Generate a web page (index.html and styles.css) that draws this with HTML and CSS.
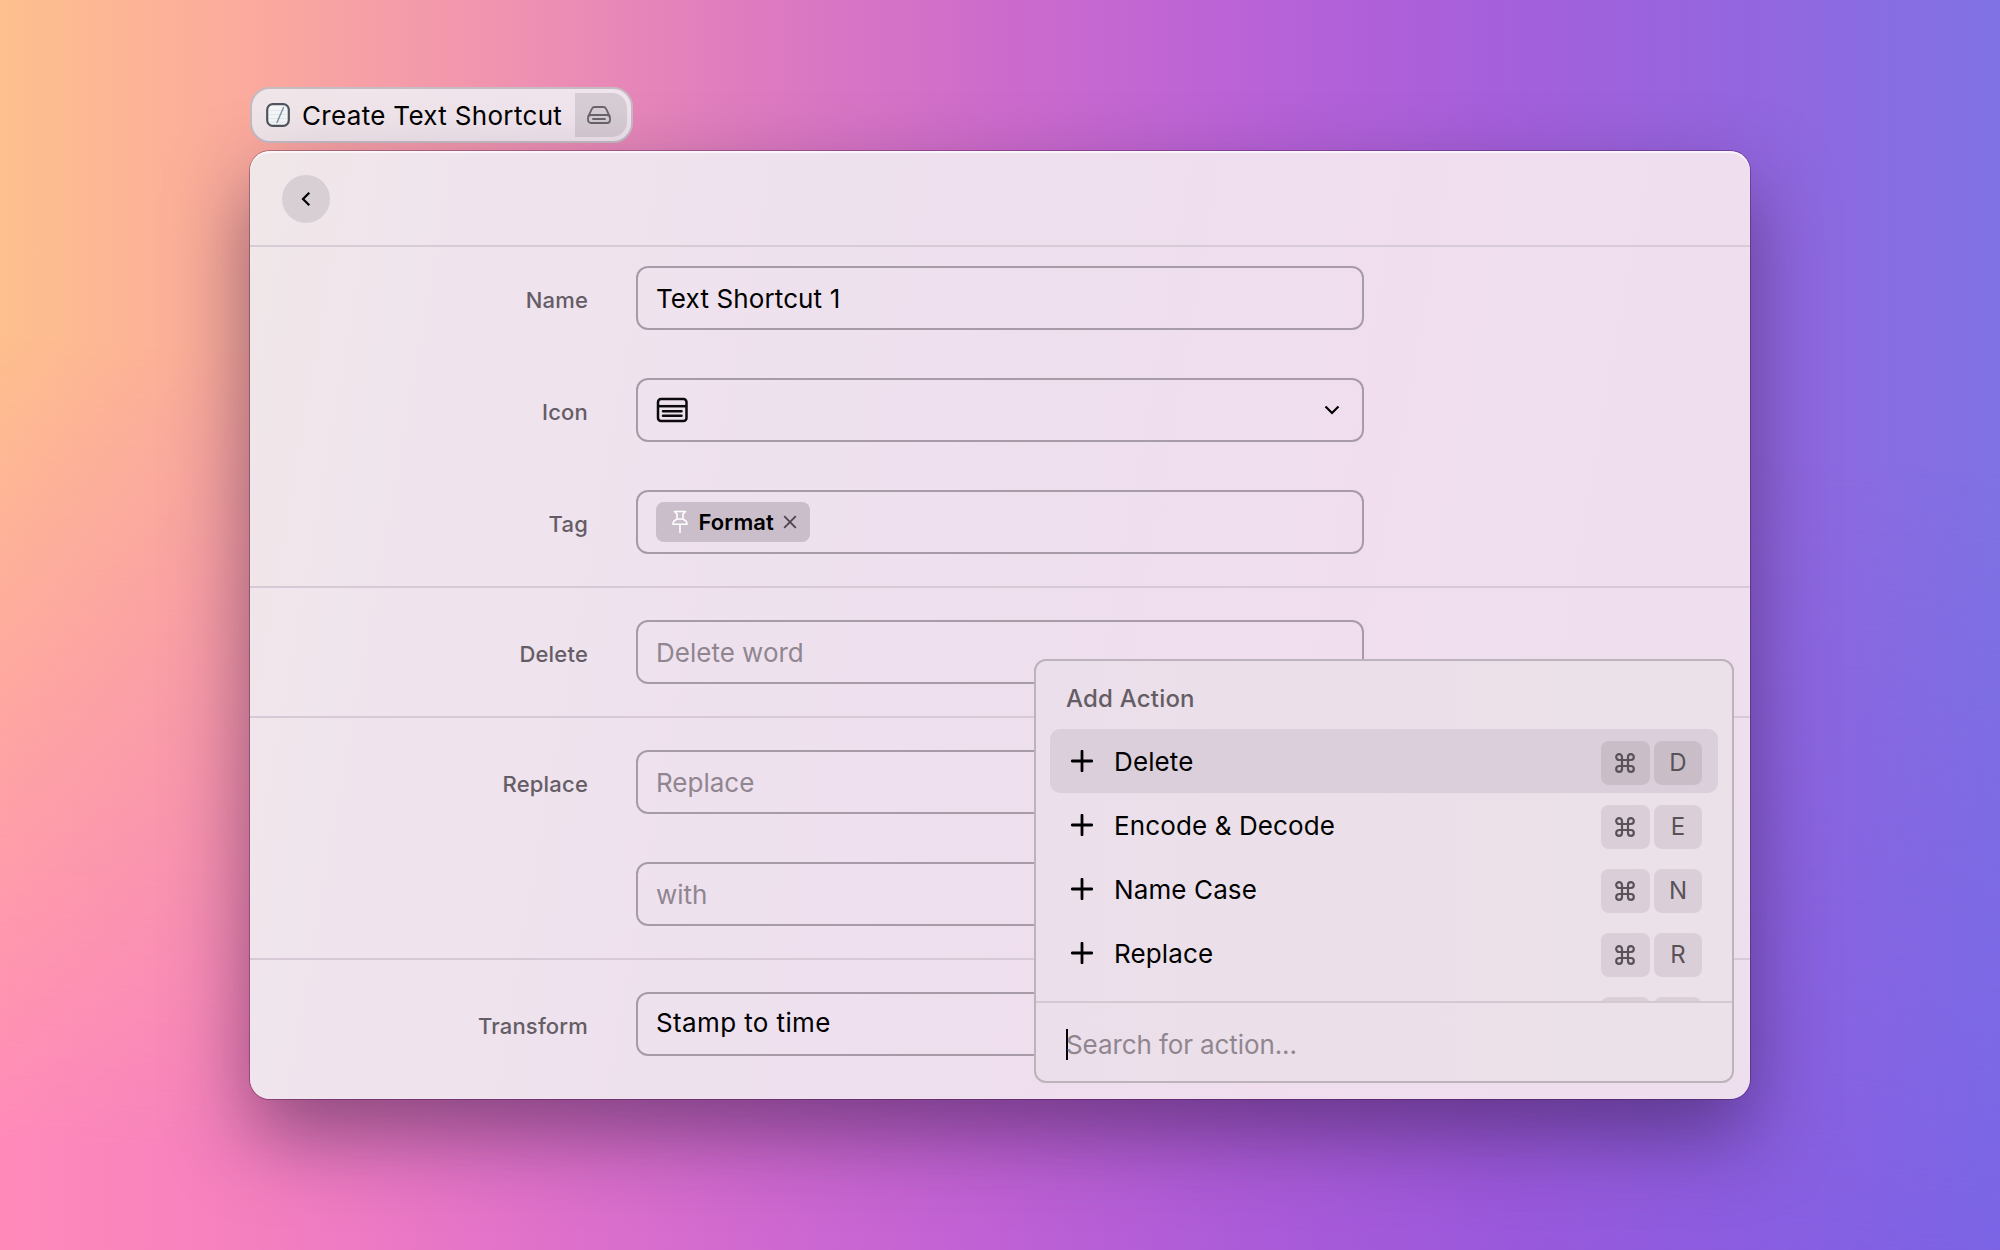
FILE: index.html
```
<!DOCTYPE html>
<html lang="en">
<head>
<meta charset="utf-8">
<title>Create Text Shortcut</title>
<link rel="stylesheet" href="styles.css">
</head>
<body>
<svg width="0" height="0" class="sprite" aria-hidden="true">
  <symbol id="plus" viewBox="0 0 22 22"><path d="M11 1.2v19.6M1.2 11h19.6" fill="none" stroke="currentColor" stroke-width="2.8" stroke-linecap="round"/></symbol>
  <symbol id="cmd" viewBox="0 0 20 20"><path d="M7 7h6v6H7zM7 7H4.1A2.9 2.9 0 1 1 7 4.1zM13 7V4.1A2.9 2.9 0 1 1 15.9 7zM13 13h2.9A2.9 2.9 0 1 1 13 15.9zM7 13v2.9A2.9 2.9 0 1 1 4.1 13z" fill="none" stroke="currentColor" stroke-width="2.2"/></symbol>
</svg>
<main class="desktop">
  <div class="title-pill">
    <svg class="app-icon" viewBox="0 0 24 24">
      <rect x="1.2" y="1.2" width="21.6" height="21.6" rx="5.6" fill="#f6f7f9" stroke="#50565f" stroke-width="2.2"/>
      <path d="M4 7.5h16M4 11.5h16M4 15.5h16M4 19h16" stroke="#e2e4e8" stroke-width=".8"/>
      <path d="M17.500 4.500 11 19.500" stroke="#7d98a8" stroke-width="1.5" stroke-linecap="round"/>
    </svg>
    <h1 class="title">Create Text Shortcut</h1>
    <span class="drive">
      <svg width="24" height="18" viewBox="0 0 24 18" fill="none" stroke="#6b646b" stroke-width="1.8" stroke-linejoin="round" stroke-linecap="round">
        <path d="M1.500 10 5 2.700Q5.800 1 7.700 1h8.600Q18.200 1 19 2.700L22.500 10"/>
        <rect x="1" y="9" width="22" height="8" rx="3"/>
        <path d="M6 13h12"/>
      </svg>
    </span>
  </div>
  <section class="window">
    <header class="toolbar">
      <button class="back" aria-label="Back"><svg width="10" height="16" viewBox="0 0 10 16"><path d="M8.300 1.800 2 8l6.300 6.200" fill="none" stroke="#000" stroke-width="2.200"/></svg></button>
    </header>
    <div class="group group-first">
      <div class="row"><label class="label">Name</label><div class="field">Text Shortcut 1</div></div>
      <div class="row"><label class="label">Icon</label><div class="field field-icon">
        <svg width="32" height="26" viewBox="0 0 32 26" fill="none" stroke="#0c0a0c" stroke-width="2.500"><rect x="2" y="2" width="28.500" height="22" rx="3"/><path d="M2 9.200h28"/><path d="M7 14.200h18.500M7 18.700h18.500" stroke-linecap="round"/></svg>
        <svg width="16" height="10" viewBox="0 0 16 10"><path d="M1.500 1.500 8 8l6.500-6.500" fill="none" stroke="#000" stroke-width="2.200"/></svg>
      </div></div>
      <div class="row"><label class="label">Tag</label><div class="field">
        <span class="tag">
          <svg width="16" height="24" viewBox="0 0 16 24" fill="none" stroke="#fff" stroke-width="1.600" stroke-linejoin="round" stroke-linecap="round"><path d="M2.500 1.500h11L11 4v5M2.500 1.500 5 4v5M5 9.200C2.600 10 1 11.900 1 14.200h14c0-2.300-1.600-4.200-4-5M5 9h6M8 14.200v8.300"/></svg>
          <span class="tag-name">Format</span>
          <svg width="14" height="14" viewBox="0 0 14 14"><path d="m1.200 1.200 11.600 11.600M12.800 1.200 1.200 12.800" stroke="#4d454c" stroke-width="1.800"/></svg>
        </span>
      </div></div>
    </div>
    <div class="group">
      <div class="row"><label class="label">Delete</label><div class="field hint">Delete word</div></div>
    </div>
    <div class="group">
      <div class="row"><label class="label">Replace</label><div class="field hint">Replace</div></div>
      <div class="row"><label class="label"></label><div class="field hint">with</div></div>
    </div>
    <div class="group">
      <div class="row"><label class="label">Transform</label><div class="field field-select">Stamp to time</div></div>
    </div>
    <aside class="menu">
      <div class="menu-list">
        <h2 class="menu-title">Add Action</h2>
        <div class="item active"><svg class="plus"><use href="#plus"/></svg><span class="item-name">Delete</span><kbd class="key key-cmd"><svg class="cmd"><use href="#cmd"/></svg></kbd><kbd class="key">D</kbd></div>
        <div class="item"><svg class="plus"><use href="#plus"/></svg><span class="item-name">Encode &amp; Decode</span><kbd class="key key-cmd"><svg class="cmd"><use href="#cmd"/></svg></kbd><kbd class="key">E</kbd></div>
        <div class="item"><svg class="plus"><use href="#plus"/></svg><span class="item-name">Name Case</span><kbd class="key key-cmd"><svg class="cmd"><use href="#cmd"/></svg></kbd><kbd class="key">N</kbd></div>
        <div class="item"><svg class="plus"><use href="#plus"/></svg><span class="item-name">Replace</span><kbd class="key key-cmd"><svg class="cmd"><use href="#cmd"/></svg></kbd><kbd class="key">R</kbd></div>
        <div class="item"><span class="item-name"></span><kbd class="key key-cmd"></kbd><kbd class="key"></kbd></div>
      </div>
      <div class="search"><span class="caret"></span><span class="search-hint">Search for action...</span></div>
    </aside>
  </section>
</main>
</body>
</html>
```
FILE: styles.css
```
* { box-sizing: border-box; }
body { margin: 0; font-family: Inter, "Liberation Sans", sans-serif; color: #000; }
.sprite { display: none; }
.desktop {
  position: relative;
  isolation: isolate;
  width: 2000px;
  height: 1250px;
  overflow: hidden;
  padding: 87px 250px 0;
  background: linear-gradient(90deg, #fec08d 0%, #fbaa9d 12.5%, #f093b0 25%, #de7bc0 37.5%, #cd6bcc 50%, #b962d7 62.5%, #a55fdb 75%, #9366df 87.5%, #7f72e4 100%);
}
.desktop::before {
  content: "";
  position: absolute;
  inset: 0;
  z-index: -1;
  background: linear-gradient(90deg, #ff8ab9 0%, #f580bf 12.5%, #e373c9 25%, #d069d0 37.5%, #bf61d5 50%, #ab5bd8 62.5%, #9a58db 75%, #8a5de0 87.5%, #7a64e5 100%);
  -webkit-mask-image: linear-gradient(184deg, transparent 34%, #000 92%);
  mask-image: linear-gradient(184deg, transparent 34%, #000 92%);
}
.title-pill {
  display: flex;
  align-items: center;
  width: 383px;
  height: 56px;
  padding: 4px 4px 4px 14px;
  border: 2px solid #c4bbc3;
  border-radius: 20px;
  background: linear-gradient(90deg, #f0e6e9, #f0e4ee);
}
.app-icon { width: 24px; height: 24px; flex: none; }
.title { flex: 1; margin: 0 0 0 12px; padding-top: 2px; font-size: 26px; font-weight: 400; line-height: 32px; white-space: nowrap; letter-spacing: .32px; }
.drive { display: flex; align-items: center; justify-content: center; width: 52px; height: 44px; padding-right: 4px; border-radius: 0 15px 15px 0; background: #d7cdd4; }
.window {
  position: relative;
  width: 1500px;
  height: 948px;
  margin-top: 8px;
  border-radius: 20px;
  background: linear-gradient(100deg, #f0e7e8 0%, #efe4ee 15%, #eee0ee 45%, #f0deee 70%, #eedfee 100%);
  box-shadow: 0 0 0 1px rgba(60, 10, 60, .35), inset 0 2px 1px rgba(255, 255, 255, .7), 0 36px 80px rgba(40, 20, 60, .5);
}
.toolbar { display: flex; align-items: center; height: 96px; padding: 2px 32px 0; border-bottom: 2px solid #d7cbd5; }
.back { display: flex; align-items: center; justify-content: center; width: 48px; height: 48px; padding: 0; border: 0; border-radius: 50%; background: #d8cfd5; }
.group { display: flex; flex-direction: column; gap: 48px; padding: 32px 0; border-bottom: 2px solid #d7cad6; }
.group-first { padding-top: 19px; }
.group:nth-last-child(2) { border-bottom: 0; }
.row { display: flex; height: 64px; }
.label { width: 338px; margin-right: 48px; padding-top: 4px; color: #655d65; font-size: 22px; font-weight: 500; line-height: 60px; text-align: right; letter-spacing: .18px; }
.field { display: flex; align-items: center; width: 728px; height: 64px; padding: 0 18px; border: 2px solid #a89ba8; border-radius: 12px; font-size: 26px; letter-spacing: .12px; }
.field-icon { justify-content: space-between; padding-right: 22px; }
.field-select { padding-bottom: 4px; letter-spacing: .38px; }
.hint { color: #8f8690; letter-spacing: 0; }
.tag { display: flex; align-items: center; width: 154px; height: 40px; padding: 0 13px 0 16px; border-radius: 8px; background: #cbbecb; }
.tag-name { flex: 1; margin-left: 10.5px; font-size: 22px; font-weight: 570; letter-spacing: .12px; }
.menu {
  position: absolute;
  left: 784px;
  top: 508px;
  width: 700px;
  height: 424px;
  overflow: hidden;
  border: 2px solid #bdb3bc;
  border-radius: 12px;
  background: linear-gradient(90deg, #ebdfeb, #ebe0e9 50%, #ebe1e8);
}
.menu-list { height: 340px; padding: 0 14px; overflow: hidden; }
.menu-title { height: 68px; margin: 0; padding: 8px 0 0 16px; color: #655d64; font-size: 24px; font-weight: 500; line-height: 60px; letter-spacing: .2px; }
.item { display: flex; align-items: center; height: 64px; padding: 0 16px 0 21px; border-radius: 10px; }
.active { background: #dacfda; }
.plus { width: 22px; height: 22px; }
.item-name { flex: 1; margin-left: 21px; font-size: 26px; letter-spacing: .12px; }
.key { display: flex; align-items: center; justify-content: center; width: 48px; height: 44px; margin-top: 4px; padding-bottom: 1px; border-radius: 8px; background: #dacfd8; color: #5a5259; font: 400 24px Inter, sans-serif; }
.key-cmd { width: 49px; margin-right: 4px; padding-right: 2px; }
.active .key { background: #c9bec8; }
.cmd { width: 20px; height: 20px; }
.search { display: flex; align-items: center; height: 82px; padding: 3px 0 0 30px; border-top: 2px solid #d4c8d2; }
.caret { width: 2px; height: 31px; margin-right: -2px; background: #000; }
.search-hint { color: #90868f; font-size: 26px; letter-spacing: -.1px; }
```
